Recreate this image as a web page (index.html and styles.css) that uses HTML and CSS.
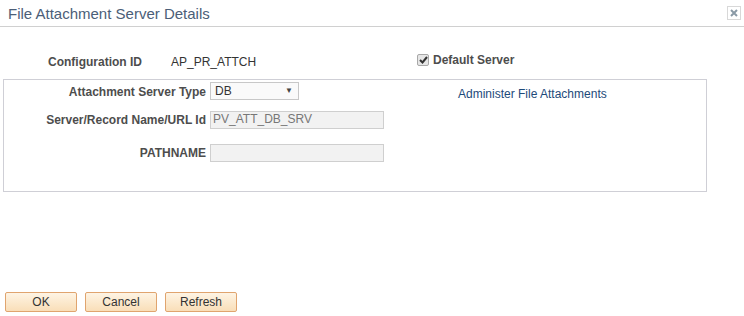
FILE: index.html
```html
<!DOCTYPE html>
<html lang="en">
<head>
    <meta charset="UTF-8">
    <title>File Attachment Server Details</title>
    <link rel="stylesheet" href="styles.css">
</head>
<body>
    <div class="header">
        <span class="title">File Attachment Server Details</span>
        <span class="close-btn">
            <svg width="8" height="8" viewBox="0 0 8 8">
                <path d="M1 1 L7 7 M7 1 L1 7" stroke="#8a9aa6" stroke-width="2"/>
            </svg>
        </span>
    </div>

    <div class="top-row">
        <span class="lbl config-lbl">Configuration ID</span>
        <span class="config-val">AP_PR_ATTCH</span>
        <label class="default-srv">
            <span class="chk">
                <svg width="9" height="8" viewBox="0 0 9 8">
                    <path d="M1 4 L3.5 6.5 L8 1" fill="none" stroke="#333" stroke-width="2"/>
                </svg>
            </span>
            Default Server
        </label>
    </div>

    <div class="group">
        <div class="form-grid">
            <span class="lbl">Attachment Server Type</span>
            <div class="field-line">
                <span class="select">DB <span class="arrow">&#9660;</span></span>
                <a class="admin-link" href="#">Administer File Attachments</a>
            </div>

            <span class="lbl">Server/Record Name/URL Id</span>
            <span class="input disabled">PV_ATT_DB_SRV</span>

            <span class="lbl path-lbl">PATHNAME</span>
            <span class="input disabled path-input"></span>
        </div>
    </div>

    <div class="buttons">
        <button class="btn">OK</button>
        <button class="btn">Cancel</button>
        <button class="btn">Refresh</button>
    </div>
</body>
</html>
```

FILE: styles.css
```css
body {
    margin: 0;
    width: 744px;
    height: 316px;
    background: #fff;
    font-family: "Liberation Sans", Arial, sans-serif;
    font-size: 12px;
    color: #333;
    position: relative;
}
.header {
    height: 26px;
    border-bottom: 1px solid #d0d0d0;
    display: flex;
    align-items: center;
    justify-content: space-between;
    padding: 0 3px 0 8px;
}
.title {
    font-size: 15px;
    color: #4b5e78;
}
.close-btn {
    width: 12px;
    height: 12px;
    border: 1px solid #d8d8d8;
    display: flex;
    align-items: center;
    justify-content: center;
    margin-top: -1px;
}
.top-row {
    display: flex;
    align-items: center;
    height: 16px;
    margin-top: 27px;
}
.lbl {
    font-weight: bold;
    color: #4d4d4d;
}
.config-lbl {
    margin-left: 48px;
    width: 123px;
}
.config-val {
    width: 246px;
    color: #333;
}
.default-srv {
    display: flex;
    align-items: center;
    gap: 4px;
    font-weight: bold;
    color: #4d4d4d;
    margin-top: -4px;
}
.chk {
    width: 10px;
    height: 10px;
    border: 1px solid #a8a8a8;
    border-radius: 2px;
    background: #e6e6e6;
    display: flex;
    align-items: center;
    justify-content: center;
}
.group {
    margin: 9px 0 0 3px;
    width: 702px;
    height: 111px;
    border: 1px solid #cfcfd6;
}
.form-grid {
    display: grid;
    grid-template-columns: 202px auto;
    column-gap: 4px;
    row-gap: 10px;
    align-items: center;
    margin-top: 2px;
}
.form-grid .lbl {
    text-align: right;
}
.field-line {
    display: flex;
    align-items: flex-start;
}
.select {
    width: 80px;
    height: 16px;
    border: 1px solid #c8c8c8;
    background: #fafafa;
    padding: 0 3px 0 4px;
    display: flex;
    justify-content: space-between;
    align-items: center;
    color: #333;
    line-height: 14px;
}
.arrow {
    font-size: 8px;
    color: #444;
    margin-right: 2px;
}
.admin-link {
    margin-left: 159px;
    margin-top: 5px;
    line-height: 14px;
    color: #1d4a7a;
    text-decoration: none;
}
.input {
    width: 168px;
    height: 16px;
    border: 1px solid #cfcfcf;
    padding: 0 2px;
    line-height: 14px;
    display: block;
}
.input.disabled {
    background: #f2f2f2;
    color: #777;
}
.path-lbl,
.path-input {
    margin-top: 5px;
}
.buttons {
    position: absolute;
    left: 5px;
    top: 292px;
    display: flex;
    gap: 8px;
}
.btn {
    width: 72px;
    height: 20px;
    border: 1px solid #e0a46e;
    border-radius: 2px;
    background: linear-gradient(#fef4e4, #f9deb8);
    font-family: "Liberation Sans", Arial, sans-serif;
    font-size: 12px;
    color: #333;
    padding: 0;
}
```
